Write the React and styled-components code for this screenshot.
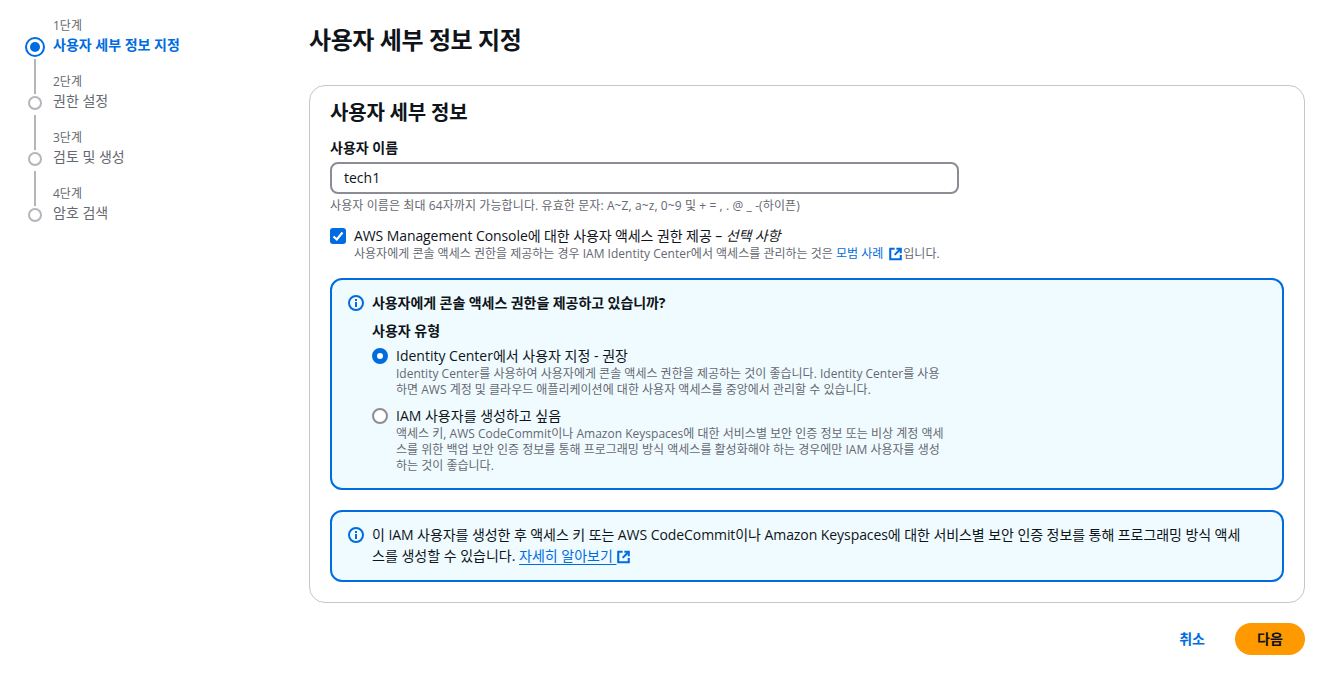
import React from "react"
import styled, { createGlobalStyle } from "styled-components"

const GlobalStyle = createGlobalStyle`
  html, body {
    margin: 0;
    height: 678px;
    overflow: hidden;
    background: #fff;
  }
  body {
    font-family: "Open Sans", "Noto Sans CJK KR", sans-serif;
    font-size: 14px;
    line-height: 20px;
    color: #0f141a;
  }
  * {
    box-sizing: border-box;
  }
`

const Page = styled.div`
  display: grid;
  grid-template-columns: 284px 996px;
  padding-left: 25px;
`

const StepList = styled.ol`
  list-style: none;
  margin: 0;
  padding: 17px 0 0;
`

const Step = styled.li`
  display: grid;
  grid-template-columns: 20px 1fr;
  column-gap: 8px;
  height: ${(p) => (p.$active ? "40px" : "56px")};
`

const Rail = styled.div`
  display: flex;
  flex-direction: column;
  align-items: center;
  justify-content: flex-end;
  padding-top: 2px;
  padding-bottom: ${(p) => (p.$active ? "0" : "3px")};
`

const Connector = styled.span`
  flex: 1;
  width: 2px;
  margin-bottom: 2px;
  background: #b4b4bb;
`

const Dot = styled.span`
  width: 14px;
  height: 14px;
  border: 2px solid #b4b4bb;
  border-radius: 50%;
`

const ActiveDot = styled.span`
  width: 20px;
  height: 20px;
  border: 2px solid #006ce0;
  border-radius: 50%;
  display: flex;
  align-items: center;
  justify-content: center;

  &::after {
    content: "";
    width: 10px;
    height: 10px;
    border-radius: 50%;
    background: #006ce0;
  }
`

const StepText = styled.div`
  display: flex;
  flex-direction: column;
  justify-content: flex-end;
  gap: 1px;
  padding-bottom: 2px;
`

const StepNumber = styled.span`
  font-size: 12px;
  line-height: 16px;
  color: #656871;
`

const StepName = styled.span`
  color: ${(p) => (p.$active ? "#006ce0" : "#656871")};
  font-weight: ${(p) => (p.$active ? 700 : 400)};
`

const Main = styled.main`
  padding-top: 25px;
`

const PageTitle = styled.h1`
  margin: 0 0 30px;
  font-size: 24px;
  line-height: 30px;
  font-weight: 700;
  letter-spacing: -0.42px;
`

const Card = styled.section`
  height: 518px;
  padding: 15px 20px 20px;
  border: 1px solid #c6c6cd;
  border-radius: 16px;
`

const CardTitle = styled.h2`
  margin: 0 0 13px;
  font-size: 20px;
  line-height: 24px;
  font-weight: 700;
  letter-spacing: -0.2px;
`

const FieldLabel = styled.label`
  display: block;
  font-weight: 700;
  margin-bottom: 4px;
`

const TextInput = styled.input`
  display: block;
  width: 629px;
  height: 32px;
  padding: 0 12px 1px;
  border: 2px solid #8c8c94;
  border-radius: 8px;
  font: inherit;
  color: inherit;
  outline: none;
`

const Hint = styled.p`
  margin: 4px 0 0;
  font-size: 12px;
  line-height: 16px;
  color: #656871;
  letter-spacing: 0.1px;
`

const CheckRow = styled.div`
  display: flex;
  gap: 8px;
  margin-top: 12px;
`

const CheckBox = styled.span`
  flex: none;
  width: 16px;
  height: 16px;
  margin-top: 2px;
  border-radius: 3px;
  background: #006ce0;
  display: flex;
`

const CheckLabel = styled.div`
  letter-spacing: -0.09px;
`

const Description = styled.div`
  font-size: 12px;
  line-height: 16px;
  color: #656871;
  white-space: nowrap;
  letter-spacing: 0.01px;
`

const DocLink = styled.a`
  color: #006ce0;
  text-decoration: ${(p) => (p.$underline ? "underline" : "none")};
  text-underline-offset: 3px;
`

const Alert = styled.div`
  display: grid;
  grid-template-columns: 16px 1fr;
  column-gap: 8px;
  height: ${(p) => p.$height};
  margin-top: ${(p) => p.$top};
  padding: ${(p) => p.$pad} 16px 0 16px;
  border: 2px solid #006ce0;
  border-radius: 12px;
  background: #f0fbff;
`

const AlertIcon = styled.svg`
  width: 16px;
  height: 16px;
  margin-top: 2px;
  fill: none;
  stroke: #006ce0;
  stroke-width: 2;
`

const AlertTitle = styled.div`
  font-weight: 700;
  margin-bottom: 8px;
  letter-spacing: -0.07px;
`

const GroupLabel = styled.div`
  font-weight: 700;
  margin-bottom: 5px;
`

const RadioOption = styled.div`
  display: grid;
  grid-template-columns: 16px 1fr;
  column-gap: 8px;
  margin-bottom: 8px;
`

const Radio = styled.span`
  width: 16px;
  height: 16px;
  margin-top: 2px;
  border-radius: 50%;
  border: ${(p) => (p.$checked ? "5px solid #006ce0" : "2px solid #8c8c94")};
  background: #fff;
`

const AlertBody = styled.div`
  line-height: 20.5px;
  white-space: nowrap;
`

const TightLine = styled.span`
  letter-spacing: -0.07px;
`

const Actions = styled.div`
  display: flex;
  justify-content: flex-end;
  align-items: center;
  gap: 30px;
  margin-top: 20px;
`

const CancelLink = styled.a`
  color: #006ce0;
  font-weight: 700;
`

const PrimaryButton = styled.button`
  width: 70px;
  height: 32px;
  border: none;
  border-radius: 20px;
  background: #ff9900;
  color: #0f141a;
  font: inherit;
  font-weight: 700;
`

const ExternalSvg = styled.svg`
  width: 15px;
  height: 14px;
  margin-left: ${(p) => p.$left};
  vertical-align: -3px;
  fill: none;
  stroke: #006ce0;
  stroke-width: 2.4;
`

const ExternalIcon = ({ left = "5px" }) => (
  <ExternalSvg viewBox="0 0 16 16" $left={left}>
    <path d="M7 2H2v12h12V9" />
    <path d="M9 2h5v5" />
    <path d="M14 2 7 9" />
  </ExternalSvg>
)

const InfoIcon = () => (
  <AlertIcon viewBox="0 0 16 16">
    <circle cx="8" cy="8" r="7" />
    <path d="M8 7v5" />
    <path d="M8 4v2" />
  </AlertIcon>
)

const steps = [
  { number: "1단계", name: "사용자 세부 정보 지정", active: true },
  { number: "2단계", name: "권한 설정" },
  { number: "3단계", name: "검토 및 생성" },
  { number: "4단계", name: "암호 검색" },
]

export default function App() {
  return (
    <>
      <GlobalStyle />
      <Page>
        <nav>
          <StepList>
            {steps.map((s) => (
              <Step key={s.number} $active={s.active}>
                <Rail $active={s.active}>
                  {s.active ? (
                    <ActiveDot />
                  ) : (
                    <>
                      <Connector />
                      <Dot />
                    </>
                  )}
                </Rail>
                <StepText>
                  <StepNumber>{s.number}</StepNumber>
                  <StepName $active={s.active}>{s.name}</StepName>
                </StepText>
              </Step>
            ))}
          </StepList>
        </nav>
        <Main>
          <PageTitle>사용자 세부 정보 지정</PageTitle>
          <Card>
            <CardTitle>사용자 세부 정보</CardTitle>
            <FieldLabel>사용자 이름</FieldLabel>
            <TextInput defaultValue="tech1" />
            <Hint>사용자 이름은 최대 64자까지 가능합니다. 유효한 문자: A~Z, a~z, 0~9 및 + = , . @ _ -(하이픈)</Hint>
            <CheckRow>
              <CheckBox>
                <svg viewBox="0 0 16 16" width="16" height="16" fill="none" stroke="#fff" strokeWidth="2.2">
                  <path d="M3.5 8.5 6.8 11.5 12.5 4.5" />
                </svg>
              </CheckBox>
              <div>
                <CheckLabel>
                  AWS Management Console에 대한 사용자 액세스 권한 제공 – <em>선택 사항</em>
                </CheckLabel>
                <Description>
                  사용자에게 콘솔 액세스 권한을 제공하는 경우 IAM Identity Center에서 액세스를 관리하는 것은{" "}
                  <DocLink>모범 사례</DocLink>
                  <ExternalIcon />
                  입니다.
                </Description>
              </div>
            </CheckRow>
            <Alert $height="212px" $top="16px" $pad="13px">
              <InfoIcon />
              <div>
                <AlertTitle>사용자에게 콘솔 액세스 권한을 제공하고 있습니까?</AlertTitle>
                <GroupLabel>사용자 유형</GroupLabel>
                <RadioOption>
                  <Radio $checked />
                  <div>
                    <div>Identity Center에서 사용자 지정 - 권장</div>
                    <Description>
                      Identity Center를 사용하여 사용자에게 콘솔 액세스 권한을 제공하는 것이 좋습니다. Identity Center를 사용
                      <br />
                      하면 AWS 계정 및 클라우드 애플리케이션에 대한 사용자 액세스를 중앙에서 관리할 수 있습니다.
                    </Description>
                  </div>
                </RadioOption>
                <RadioOption>
                  <Radio />
                  <div>
                    <div>IAM 사용자를 생성하고 싶음</div>
                    <Description>
                      액세스 키, AWS CodeCommit이나 Amazon Keyspaces에 대한 서비스별 보안 인증 정보 또는 비상 계정 액세
                      <br />
                      스를 위한 백업 보안 인증 정보를 통해 프로그래밍 방식 액세스를 활성화해야 하는 경우에만 IAM 사용자를 생성
                      <br />
                      하는 것이 좋습니다.
                    </Description>
                  </div>
                </RadioOption>
              </div>
            </Alert>
            <Alert $height="72px" $top="20px" $pad="13px">
              <InfoIcon />
              <AlertBody>
                <TightLine>
                  이 IAM 사용자를 생성한 후 액세스 키 또는 AWS CodeCommit이나 Amazon Keyspaces에 대한 서비스별 보안 인증 정보를 통해 프로그래밍 방식 액세
                </TightLine>
                <br />
                스를 생성할 수 있습니다. <DocLink $underline>자세히 알아보기&nbsp;</DocLink>
                <ExternalIcon left="0" />
              </AlertBody>
            </Alert>
          </Card>
          <Actions>
            <CancelLink>취소</CancelLink>
            <PrimaryButton>다음</PrimaryButton>
          </Actions>
        </Main>
      </Page>
    </>
  )
}
